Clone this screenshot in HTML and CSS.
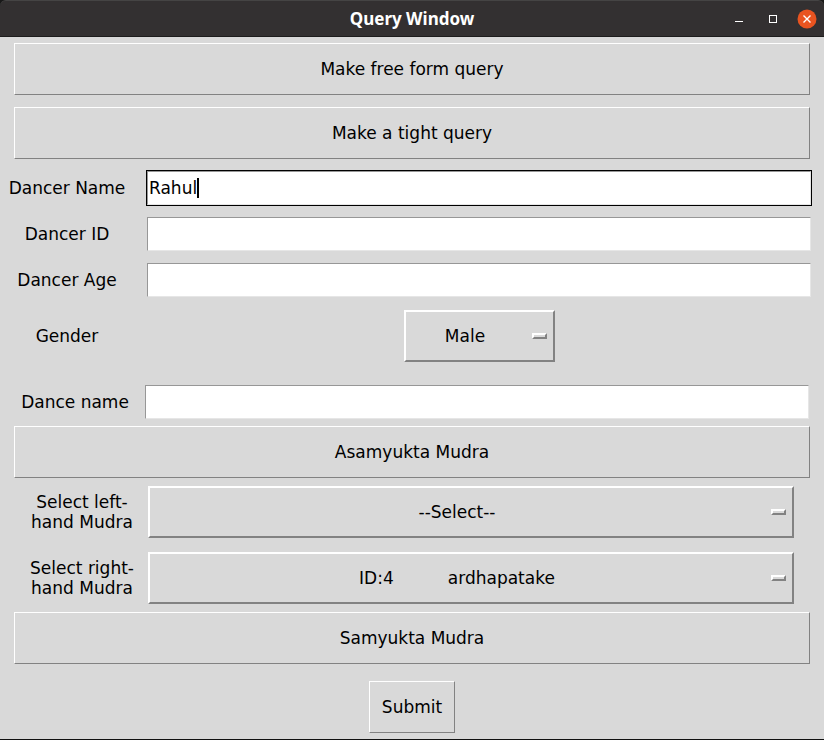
FILE: index.html
```html
<!DOCTYPE html>
<html lang="en">
<head>
<meta charset="utf-8">
<title>Query Window</title>
<meta name="viewport" content="width=device-width, initial-scale=1">
<link rel="stylesheet" href="styles.css">
</head>
<body>
<div class="window">
  <header class="titlebar">
    <h1 class="title">Query Window</h1>
    <div class="controls">
      <button type="button" class="control" aria-label="Minimize">
        <svg width="20" height="20" viewBox="0 0 20 20"><path d="M6 12h8v1H6z" fill="#fff"/></svg>
      </button>
      <button type="button" class="control" aria-label="Maximize">
        <svg width="20" height="20" viewBox="0 0 20 20"><rect x="6.5" y="6.5" width="7" height="7" fill="none" stroke="#fff"/></svg>
      </button>
      <button type="button" class="control" aria-label="Close">
        <svg width="20" height="20" viewBox="0 0 20 20"><circle cx="10" cy="10" r="9.5" fill="#e95420"/><path d="M6.5 6.5l7 7M13.5 6.5l-7 7" stroke="#fff" stroke-width="1.4"/></svg>
      </button>
    </div>
  </header>
  <form class="form">
    <button type="button" class="button wide">Make free form query</button>
    <button type="button" class="button wide">Make a tight query</button>

    <div class="fields">
      <div class="row">
        <label for="dancer-name">Dancer Name</label>
        <div class="entry active">
          <input id="dancer-name" type="text" value="Rahul">
          <span class="caret"></span>
        </div>
      </div>
      <div class="row">
        <label for="dancer-id">Dancer ID</label>
        <div class="entry"><input id="dancer-id" type="text"></div>
      </div>
      <div class="row">
        <label for="dancer-age">Dancer Age</label>
        <div class="entry"><input id="dancer-age" type="text"></div>
      </div>
      <div class="row">
        <label for="gender">Gender</label>
        <div class="menu compact">
          <select id="gender"><option>Male</option><option>Female</option></select>
          <span class="indicator"></span>
        </div>
      </div>
    </div>

    <div class="row dance">
      <label for="dance-name">Dance name</label>
      <div class="entry"><input id="dance-name" type="text"></div>
    </div>

    <button type="button" class="button wide">Asamyukta Mudra</button>

    <div class="mudras">
      <div class="row">
        <label for="left-mudra">Select left-<br>hand Mudra</label>
        <div class="menu">
          <select id="left-mudra"><option>--Select--</option></select>
          <span class="indicator"></span>
        </div>
      </div>
      <div class="row">
        <label for="right-mudra">Select right-<br>hand Mudra</label>
        <div class="menu">
          <select id="right-mudra"><option>ID:4&nbsp;&nbsp;&nbsp;&nbsp;&nbsp;&nbsp;&nbsp;&nbsp;&nbsp;&nbsp;ardhapatake</option></select>
          <span class="indicator"></span>
        </div>
      </div>
    </div>

    <button type="button" class="button wide">Samyukta Mudra</button>
    <button type="submit" class="button submit">Submit</button>
  </form>
</div>
</body>
</html>
```
FILE: styles.css
```css
* {
  box-sizing: border-box;
}

body {
  margin: 0;
  background: #181818;
  color: #000;
  font: 17px/20px "DejaVu Sans", sans-serif;
}

.window {
  display: flex;
  flex-direction: column;
  min-height: 100vh;
  border-bottom: 1px solid #111;
}

.titlebar {
  display: grid;
  grid-template-columns: 1fr auto 1fr;
  align-items: center;
  height: 37px;
  padding: 0 7px;
  border-top: 1px solid #454444;
  border-bottom: 1px solid #1d1c1c;
  border-radius: 6px 6px 0 0;
  background: #333031;
  color: #fff;
}

.title {
  grid-column: 2;
  margin: 0;
  font: bold 17px/24px "Noto Sans", sans-serif;
}

.controls {
  display: flex;
  justify-content: flex-end;
  gap: 14px;
}

.control {
  width: 20px;
  height: 20px;
  padding: 0;
  border: 0;
  background: none;
}

.control svg {
  display: block;
}

.form {
  display: flex;
  flex: 1;
  flex-direction: column;
  padding: 6px 14px;
  background: #d9d9d9;
}

.button {
  height: 52px;
  padding: 0 12px;
  border: 1px solid;
  border-color: #fff #828282 #828282 #fff;
  border-radius: 0;
  background: #d9d9d9;
  color: inherit;
  font: inherit;
}

.wide + .wide {
  margin-top: 12px;
}

.fields {
  display: flex;
  flex-direction: column;
  gap: 10px;
  margin: 11px -2px 0 -14px;
}

.row {
  display: grid;
  grid-template-columns: 134px 1fr;
  column-gap: 12px;
  align-items: center;
}

.row label {
  text-align: center;
}

.entry {
  position: relative;
  padding: 1px;
}

.entry input {
  display: block;
  width: 100%;
  height: 34px;
  padding: 0 1px;
  border: 1px solid;
  border-color: #979797 #e6e6e6 #e6e6e6 #979797;
  border-radius: 0;
  outline: 0;
  background: #fff;
  color: inherit;
  font: inherit;
}

.active {
  background: #000;
}

.active input {
  caret-color: transparent;
}

.caret {
  position: absolute;
  top: 8px;
  left: 51px;
  width: 2px;
  height: 20px;
  background: #000;
}

.menu {
  position: relative;
}

.menu select {
  display: block;
  width: 100%;
  height: 52px;
  padding: 0 28px 0 0;
  border: 2px solid;
  border-color: #fff #828282 #828282 #fff;
  border-radius: 0;
  appearance: none;
  background: #d9d9d9;
  color: inherit;
  font: inherit;
  text-align: center;
  text-align-last: center;
}

.compact {
  justify-self: center;
  width: 151px;
  margin: 2px 0;
}

.indicator {
  position: absolute;
  top: 23px;
  right: 8px;
  width: 15px;
  height: 6px;
  border: 2px solid;
  border-color: #fff #828282 #828282 #fff;
  pointer-events: none;
}

.dance {
  grid-template-columns: 122px 1fr;
  column-gap: 8px;
  margin: 20px 0 6px;
}

.mudras {
  display: flex;
  flex-direction: column;
  gap: 14px;
  margin: 8px 16px;
}

.mudras .row {
  grid-template-columns: 104px 1fr;
  column-gap: 14px;
}

.submit {
  align-self: center;
  margin-top: 17px;
}
```
